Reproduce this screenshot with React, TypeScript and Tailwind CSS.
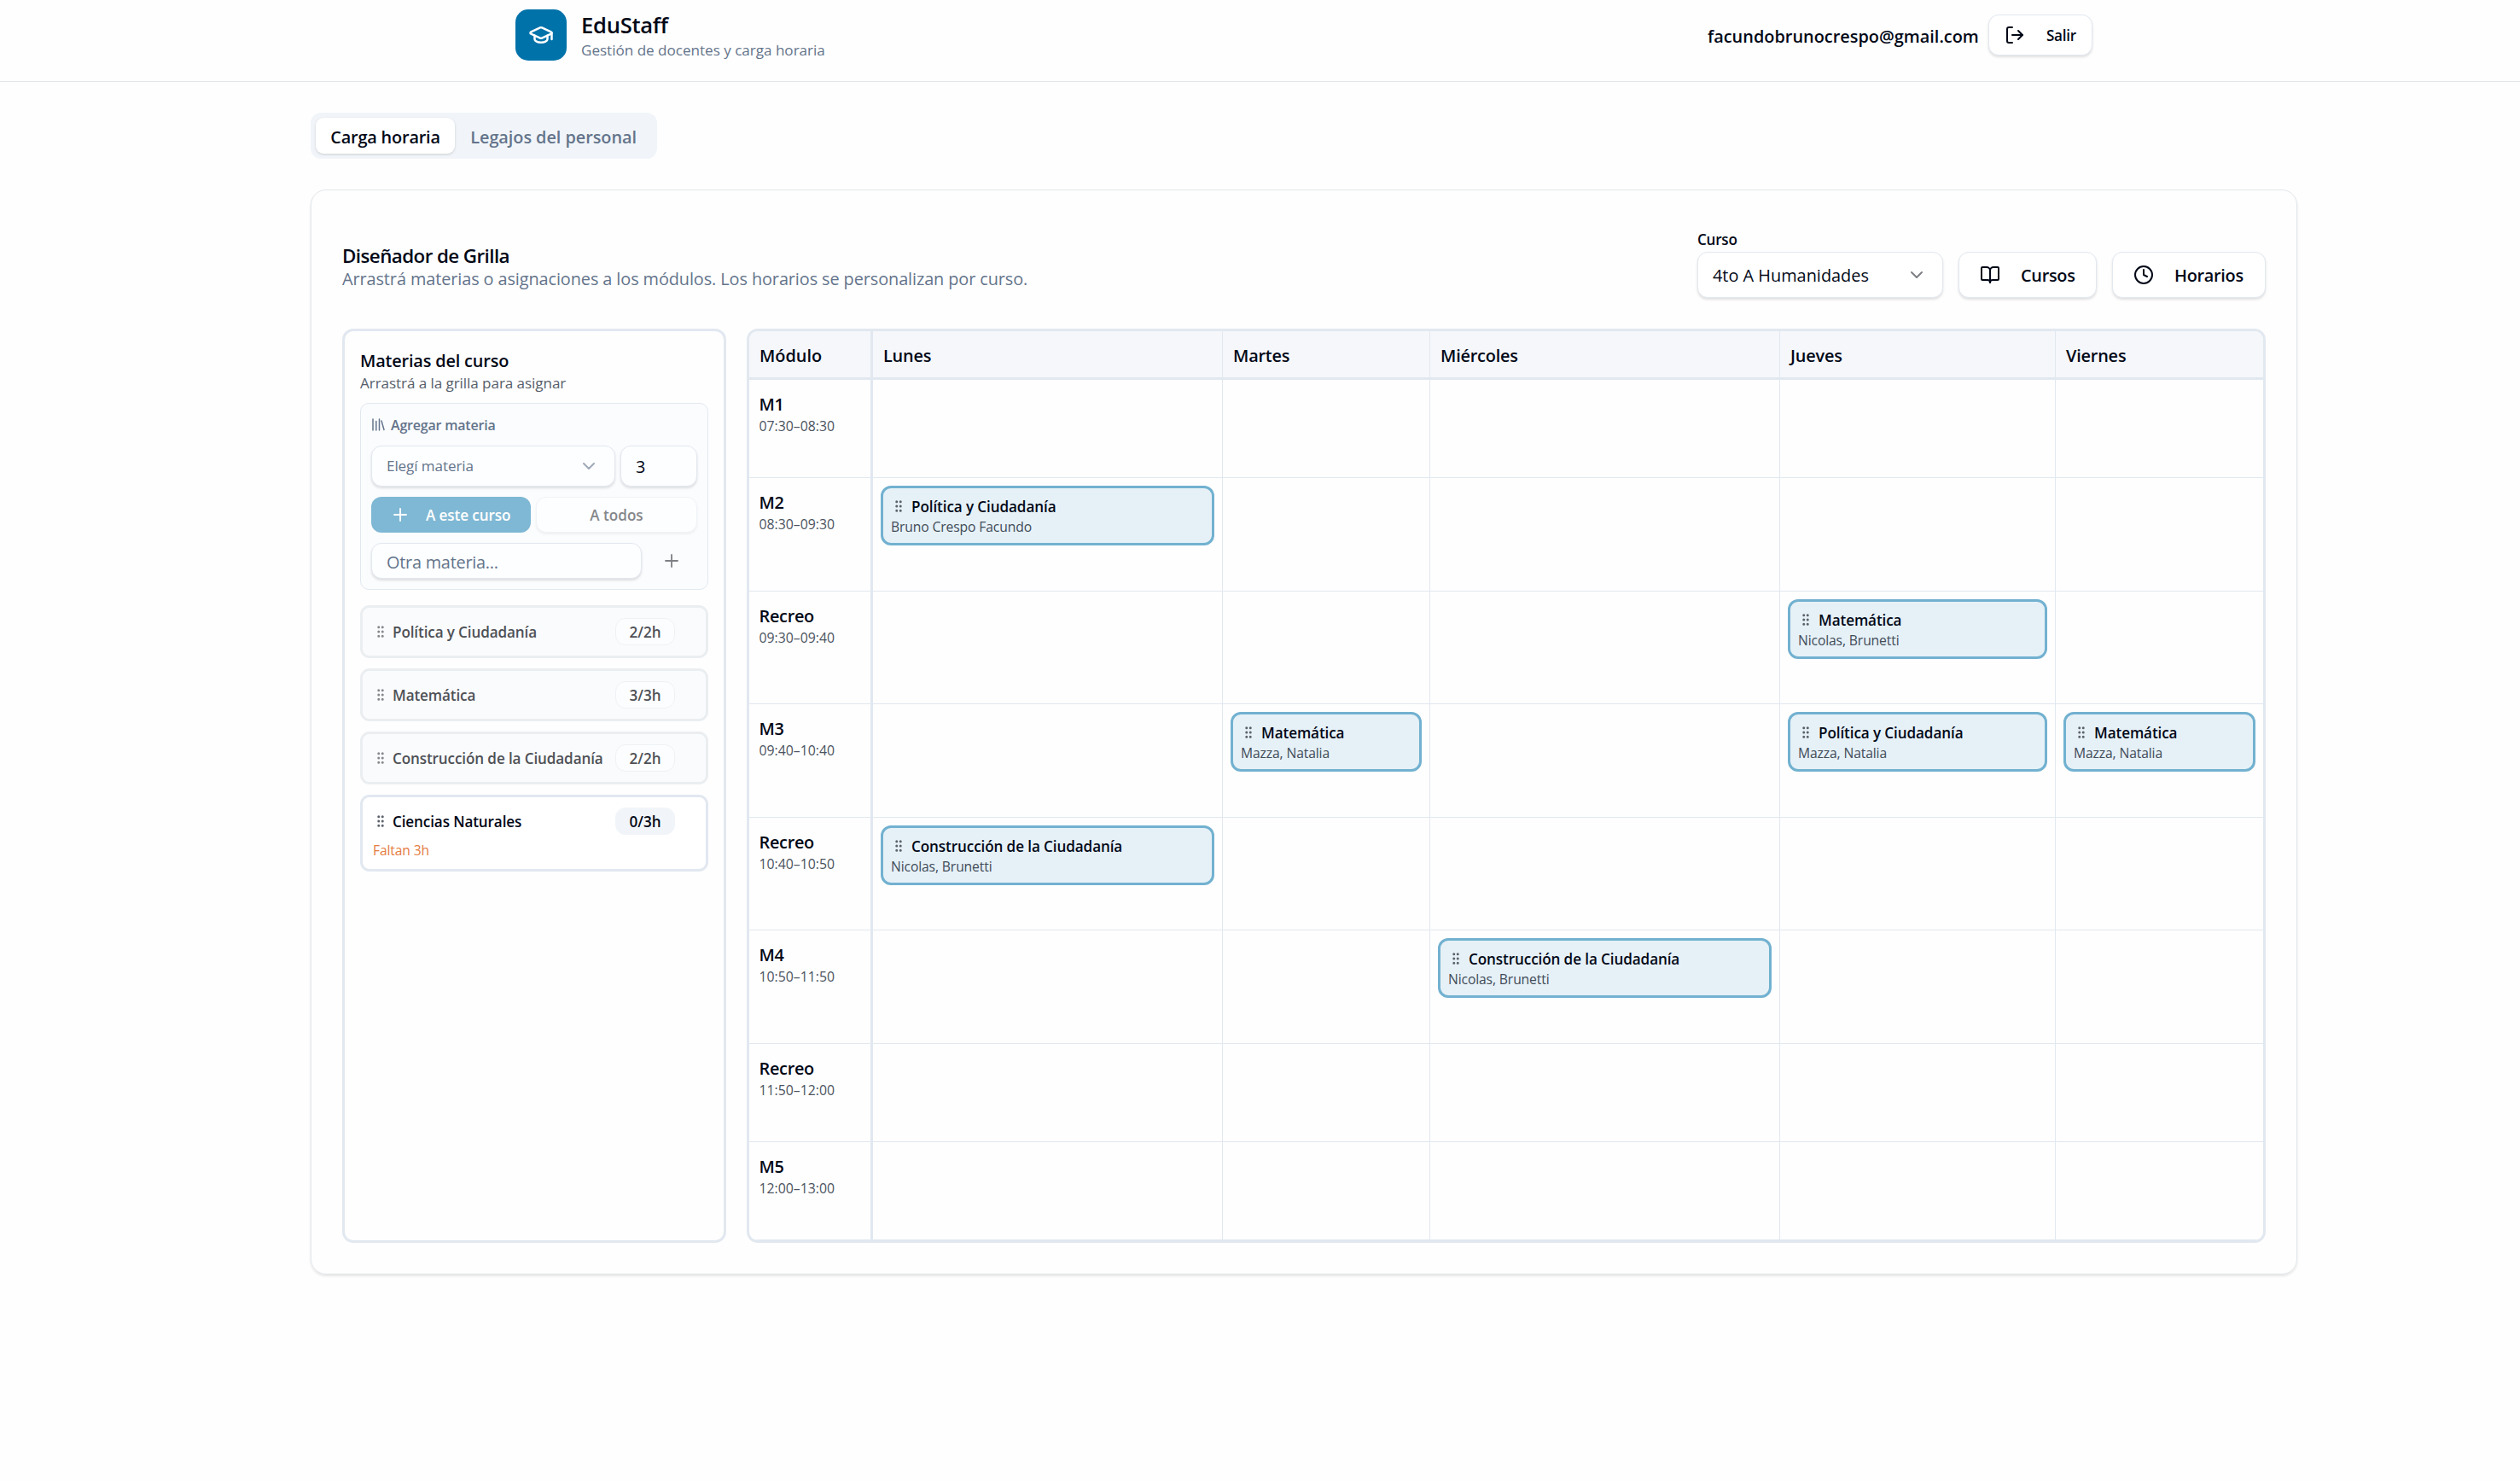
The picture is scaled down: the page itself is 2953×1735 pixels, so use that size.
import type { ReactNode } from "react";
import { BookOpen, ChevronDown, Clock, GraduationCap, GripVertical, LogOut, Plus } from "lucide-react";

type Assignment = { subject: string; teacher: string };
type Row = { name: string; time: string; height: string; cells: (Assignment | null)[] };
type Subject = { name: string; hours: string; missing?: string };

const DAYS = ["Lunes", "Martes", "Miércoles", "Jueves", "Viernes"];
const COLUMNS = "grid grid-cols-[145px_410px_243px_410px_323px_243px]";

const ROWS: Row[] = [
  { name: "M1", time: "07:30–08:30", height: "h-[115px]", cells: [null, null, null, null, null] },
  {
    name: "M2",
    time: "08:30–09:30",
    height: "h-[133px]",
    cells: [{ subject: "Política y Ciudadanía", teacher: "Bruno Crespo Facundo" }, null, null, null, null],
  },
  {
    name: "Recreo",
    time: "09:30–09:40",
    height: "h-[132px]",
    cells: [null, null, null, { subject: "Matemática", teacher: "Nicolas, Brunetti" }, null],
  },
  {
    name: "M3",
    time: "09:40–10:40",
    height: "h-[133px]",
    cells: [
      null,
      { subject: "Matemática", teacher: "Mazza, Natalia" },
      null,
      { subject: "Política y Ciudadanía", teacher: "Mazza, Natalia" },
      { subject: "Matemática", teacher: "Mazza, Natalia" },
    ],
  },
  {
    name: "Recreo",
    time: "10:40–10:50",
    height: "h-[132px]",
    cells: [{ subject: "Construcción de la Ciudadanía", teacher: "Nicolas, Brunetti" }, null, null, null, null],
  },
  {
    name: "M4",
    time: "10:50–11:50",
    height: "h-[133px]",
    cells: [null, null, { subject: "Construcción de la Ciudadanía", teacher: "Nicolas, Brunetti" }, null, null],
  },
  { name: "Recreo", time: "11:50–12:00", height: "h-[115px]", cells: [null, null, null, null, null] },
  { name: "M5", time: "12:00–13:00", height: "h-[115px]", cells: [null, null, null, null, null] },
];

const SUBJECTS: Subject[] = [
  { name: "Política y Ciudadanía", hours: "2/2h" },
  { name: "Matemática", hours: "3/3h" },
  { name: "Construcción de la Ciudadanía", hours: "2/2h" },
  { name: "Ciencias Naturales", hours: "0/3h", missing: "Faltan 3h" },
];

const SHADOW = "shadow-[0_2px_3px_rgba(0,0,0,0.12)]";

function OutlineButton({ icon, label, className }: { icon: ReactNode; label: string; className: string }) {
  return (
    <button className={`flex items-center rounded-[12px] border border-[#e2e8f0] bg-white font-semibold ${SHADOW} ${className}`}>
      {icon}
      <span className="pt-0.5">{label}</span>
    </button>
  );
}

function Header() {
  return (
    <header className="h-24 border-b border-[#e2e6ea] pt-[11px]">
      <div className="ml-[604px] flex w-[1848px] items-start justify-between">
        <div className="flex">
          <div className="flex size-[60px] items-center justify-center rounded-[15px] bg-[#0072aa] text-white">
            <GraduationCap size={30} />
          </div>
          <div className="ml-[17px]">
            <h1 className="pt-px text-[25.6px] leading-[35px] font-semibold tracking-[-0.28px]">EduStaff</h1>
            <p className="text-[17.1px] leading-6 tracking-[-0.02px] text-[#64748b]">Gestión de docentes y carga horaria</p>
          </div>
        </div>
        <div className="flex items-center pt-1.5">
          <span className="mt-1 w-[329px] text-[19.9px] leading-8 font-semibold">facundobrunocrespo@gmail.com</span>
          <OutlineButton
            className="h-12 w-[122px] pl-[18px] text-[17.1px] tracking-[-0.3px]"
            icon={<LogOut size={24} className="mr-[25px]" />}
            label="Salir"
          />
        </div>
      </div>
    </header>
  );
}

function Tabs() {
  return (
    <nav className="flex h-[54px] w-[406px] rounded-[12px] bg-[#f1f5f9] p-1.5 text-[19.9px] leading-[46px] font-semibold">
      <button className="h-[42px] w-[164px] rounded-[9px] bg-white tracking-[-0.2px] shadow-[0_1px_3px_rgba(0,0,0,0.16)]">
        Carga horaria
      </button>
      <button className="h-[42px] w-[232px] tracking-[-0.06px] text-[#64748b]">Legajos del personal</button>
    </nav>
  );
}

function AddSubject() {
  return (
    <div className="mt-[5px] h-[219px] rounded-[10px] border border-[#e2e8f0] bg-[#fbfcfe] pt-3 pl-3">
      <div className="flex h-[25px] items-center pl-px text-[#64748b]">
        <svg width="15" height="15" viewBox="0 0 15 15" fill="none" stroke="currentColor" strokeWidth="1.5" strokeLinecap="round">
          <path d="M1 1v13M4.800 3.500v10.500M8.500 1v13M11 3l3 10.500" />
        </svg>
        <span className="ml-[7px] text-[16px] font-semibold tracking-[-0.2px]">Agregar materia</span>
      </div>
      <div className="mt-3 flex gap-1.5">
        <div className={`flex h-12 w-[286px] items-center justify-between rounded-[12px] border border-[#e2e8f0] bg-[#fdfeff] pr-[18px] pl-[17px] text-[17.1px] text-[#64748b] ${SHADOW}`}>
          <span className="tracking-[-0.1px]">Elegí materia</span>
          <ChevronDown size={24} className="opacity-60" />
        </div>
        <div className={`flex h-12 w-[90px] items-center rounded-[12px] border border-[#e2e8f0] bg-[#fdfeff] pt-0.5 pl-[17px] text-[19.9px] ${SHADOW}`}>
          3
        </div>
      </div>
      <div className="mt-3 flex gap-1.5 text-[17.1px] leading-[42px] font-semibold">
        <button className="flex h-[42px] w-[187px] items-center rounded-[12px] bg-[#7fb8d4] pl-[22px] text-white">
          <Plus size={24} strokeWidth={1.8} />
          <span className="ml-[18px] pt-px tracking-[-0.1px]">A este curso</span>
        </button>
        <button className="flex h-[42px] w-[189px] items-center justify-center rounded-[12px] border border-[#f0f3f7] bg-[#fdfeff] pt-px text-[#85878b] shadow-[0_2px_3px_rgba(0,0,0,0.05)]">
          A todos
        </button>
      </div>
      <div className="mt-3 flex items-center">
        <div className={`h-[42px] w-[317px] rounded-[12px] border border-[#e2e8f0] bg-[#fdfeff] pl-[17px] text-[19.9px] leading-[43px] tracking-[-0.25px] text-[#64748b] ${SHADOW}`}>
          Otra materia...
        </div>
        <Plus size={24} strokeWidth={1.8} className="ml-[23px] text-[#7d7f84]" />
      </div>
    </div>
  );
}

function SubjectCard({ subject }: { subject: Subject }) {
  const open = Boolean(subject.missing);
  return (
    <div
      className={
        open
          ? "h-[90px] rounded-[11px] border-3 border-[#e2e8f0] bg-white p-3"
          : "h-[62px] rounded-[11px] border-3 border-[#ebeef1] bg-[#fafbfd] px-3 py-3 text-[#4e5156]"
      }
    >
      <div className="flex h-8 items-center">
        <GripVertical size={18} className={open ? "text-[#5b616b]" : "text-[#85888d]"} />
        <span className="ml-[5px] pt-0.5 text-[17.1px] font-semibold tracking-[-0.12px] whitespace-nowrap">{subject.name}</span>
        <span
          className={
            open
              ? "mr-6 ml-auto h-8 w-[70px] rounded-[12px] bg-[#f1f5f9] text-center text-[17.1px] leading-[34px] font-semibold"
              : "mr-6 ml-auto h-8 w-[70px] rounded-[12px] border border-[#eff2f5] bg-[#fcfdfe] text-center text-[17.1px] leading-8 font-semibold"
          }
        >
          {subject.hours}
        </span>
      </div>
      {open && <p className="mt-1.5 text-[15.6px] leading-6 tracking-[-0.1px] text-[#e57b42]">{subject.missing}</p>}
    </div>
  );
}

function Sidebar() {
  return (
    <aside className="h-[1071px] w-[450px] rounded-[13px] border-3 border-[#e2e8f0] px-[18px] pt-[21px]">
      <h3 className="text-[19.9px] leading-[28px] font-semibold tracking-[-0.17px]">Materias del curso</h3>
      <p className="h-[30px] text-[17.1px] leading-6 tracking-[-0.08px] text-[#575e6b]">Arrastrá a la grilla para asignar</p>
      <AddSubject />
      <div className="mt-[18px] flex flex-col gap-3">
        {SUBJECTS.map((s) => (
          <SubjectCard key={s.name} subject={s} />
        ))}
      </div>
    </aside>
  );
}

function AssignmentCard({ item }: { item: Assignment }) {
  return (
    <div className="h-[70px] rounded-[12px] border-3 border-[#72b1d0] bg-[#e6f1f7] px-[9px] pt-[9px] whitespace-nowrap">
      <div className="flex h-6 items-center">
        <GripVertical size={18} className="text-[#5b616b]" />
        <span className="ml-1.5 pt-0.5 text-[17.1px] leading-6 font-semibold tracking-[-0.1px]">{item.subject}</span>
      </div>
      <p className="text-[15.7px] leading-6 tracking-[-0.13px] text-[#414b58]">{item.teacher}</p>
    </div>
  );
}

function Schedule() {
  return (
    <div className="h-[1071px] w-[1780px] overflow-hidden rounded-[13px] border-3 border-[#e2e8f0]">
      <div className={`${COLUMNS} h-[57px] border-b-3 border-[#e2e8f0] bg-[#f5f7fb] text-[19.9px] leading-[58px] font-semibold`}>
        <div className="h-[54px] border-r-3 border-[#e2e8f0] pl-3">Módulo</div>
        {DAYS.map((day) => (
          <div key={day} className="h-[54px] border-r border-[#e2e8f0] pl-3 tracking-[-0.2px] last:border-r-0">
            {day}
          </div>
        ))}
      </div>
      {ROWS.map((row) => (
        <div key={row.time} className={`${COLUMNS} ${row.height} border-b border-[#e2e8f0]`}>
          <div className="border-r-3 border-[#e2e8f0] pt-[15px] pl-[11.5px]">
            <p className="text-[19.9px] leading-[27px] font-semibold tracking-[-0.3px]">{row.name}</p>
            <p className="text-[15.8px] leading-6 font-medium text-[#4b5360]">{row.time}</p>
          </div>
          {row.cells.map((cell, i) => (
            <div key={DAYS[i]} className="border-r border-[#e2e8f0] pt-[9px] pr-[9px] pl-[9px] last:border-r-0">
              {cell && <AssignmentCard item={cell} />}
            </div>
          ))}
        </div>
      ))}
    </div>
  );
}

function GridDesigner() {
  return (
    <section className="mt-9 h-[1271px] w-[2328px] rounded-[18px] border border-[#e2e6ea] pt-[48px] pr-9 pl-9 shadow-[0_2px_3px_rgba(0,0,0,0.1)]">
      <div className="flex h-[78px] justify-between">
        <div className="pt-4">
          <h2 className="text-[22.4px] leading-[25px] font-semibold tracking-[-0.58px]">Diseñador de Grilla</h2>
          <p className="text-[19.9px] leading-[30px] tracking-[-0.1px] text-[#64748b]">
            Arrastrá materias o asignaciones a los módulos. Los horarios se personalizan por curso.
          </p>
        </div>
        <div className="flex items-end gap-[18px]">
          <div>
            <p className="h-6 pt-px text-[17.1px] leading-[18px] font-semibold tracking-[-0.25px]">Curso</p>
            <div className={`flex h-[54px] w-[288px] items-center justify-between rounded-[12px] border border-[#e2e8f0] bg-white pr-[18px] pl-[17px] text-[19.9px] ${SHADOW}`}>
              <span className="pt-0.5">4to A Humanidades</span>
              <ChevronDown size={24} className="text-[#7d7f84]" />
            </div>
          </div>
          <OutlineButton
            className="h-[54px] w-[162px] pl-6 text-[19.9px] tracking-[-0.3px]"
            icon={<BookOpen size={24} className="mr-6" />}
            label="Cursos"
          />
          <OutlineButton
            className="h-[54px] w-[180px] pl-6 text-[19.9px] tracking-[-0.3px]"
            icon={<Clock size={24} className="mr-6" />}
            label="Horarios"
          />
        </div>
      </div>
      <div className="mt-9 flex w-[2254px] gap-6">
        <Sidebar />
        <Schedule />
      </div>
    </section>
  );
}

export default function App() {
  return (
    <div className="h-[1735px] w-[2953px] overflow-hidden bg-[#fefefe] font-['Open_Sans','Noto_Sans',sans-serif] text-[#020817]">
      <Header />
      <main className="ml-[364px] pt-9">
        <Tabs />
        <GridDesigner />
      </main>
    </div>
  );
}
